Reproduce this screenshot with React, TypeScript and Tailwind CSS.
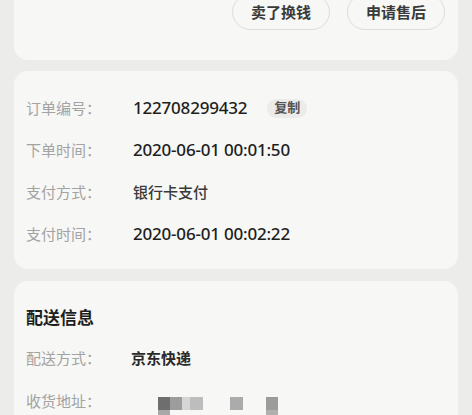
import React from 'react';

const font = { fontFamily: '"Noto Sans", "Noto Sans CJK SC", sans-serif' };

function Row({ label, children, labelW = 'w-[107px]' }: { label: string; children: React.ReactNode; labelW?: string }) {
  return (
    <div className="flex h-[42px] items-center">
      <span className={`${labelW} shrink-0 text-[15px] text-[#a3a3a3]`}>{label}</span>
      {children}
    </div>
  );
}

export default function App() {
  return (
    <div className="h-[415px] bg-[#ececea] px-[14px] overflow-hidden" style={font}>
      {/* actions card */}
      <div className="-mt-[18px] rounded-[14px] bg-[#f7f7f5] pt-3 pb-[30px] pr-[13px]">
        <div className="flex justify-end gap-[17px]">
          <button className="h-9 w-[98px] rounded-full border border-[#dcdcda] text-[15px] font-semibold text-[#3a3a3a]">
            卖了换钱
          </button>
          <button className="h-9 w-[98px] rounded-full border border-[#dcdcda] text-[15px] font-semibold text-[#3a3a3a]">
            申请售后
          </button>
        </div>
      </div>

      {/* order info */}
      <div className="mt-[11px] rounded-[14px] bg-[#f7f7f5] pt-4 pb-[14px] pl-3">
        <Row label="订单编号：">
          <span className="text-[17px] font-medium tracking-[-0.2px] text-[#1e1e1e]">122708299432</span>
          <span className="ml-[20px] flex h-[19px] items-center rounded-full bg-[#ebebe9] px-[7px] text-[13px] font-semibold text-[#555]">
            复制
          </span>
        </Row>
        <Row label="下单时间：">
          <span className="text-[17px] font-medium tracking-[-0.2px] text-[#1e1e1e]">2020-06-01 00:01:50</span>
        </Row>
        <Row label="支付方式：">
          <span className="text-[15px] font-medium text-[#3a3a3a]">银行卡支付</span>
        </Row>
        <Row label="支付时间：">
          <span className="text-[17px] font-medium tracking-[-0.2px] text-[#1e1e1e]">2020-06-01 00:02:22</span>
        </Row>
      </div>

      {/* delivery info */}
      <div className="mt-3 rounded-[14px] bg-[#f7f7f5] pt-[25px] pb-6 pl-3">
        <div className="flex h-6 items-center text-[17px] font-bold text-[#1e1e1e]">配送信息</div>
        <div className="mt-[7px]">
          <Row label="配送方式：" labelW="w-[105px]">
            <span className="text-[15px] font-bold text-[#2a2a2a]">京东快递</span>
          </Row>
          <div className="flex h-[44px] items-center">
            <span className="w-[132px] shrink-0 text-[15px] text-[#a3a3a3]">收货地址：</span>
            <div className="mt-[18px] flex flex-col">
              <div className="flex h-[13px]">
                <div className="w-3 bg-[#6e6e6e]" />
                <div className="w-3 bg-[#9c9c9c]" />
                <div className="w-2 bg-[#d6d6d6]" />
                <div className="w-[13px] bg-[#bdbdbd]" />
                <div className="w-[27px]" />
                <div className="w-[13px] bg-[#ababab]" />
                <div className="w-[23px]" />
                <div className="w-3 bg-[#9c9c9c]" />
              </div>
              <div className="flex h-[13px]">
                <div className="w-3 bg-[#a8a8a8]" />
                <div className="w-[96px]" />
                <div className="w-3 bg-[#b0b0b0]" />
              </div>
            </div>
          </div>
        </div>
      </div>
    </div>
  );
}
